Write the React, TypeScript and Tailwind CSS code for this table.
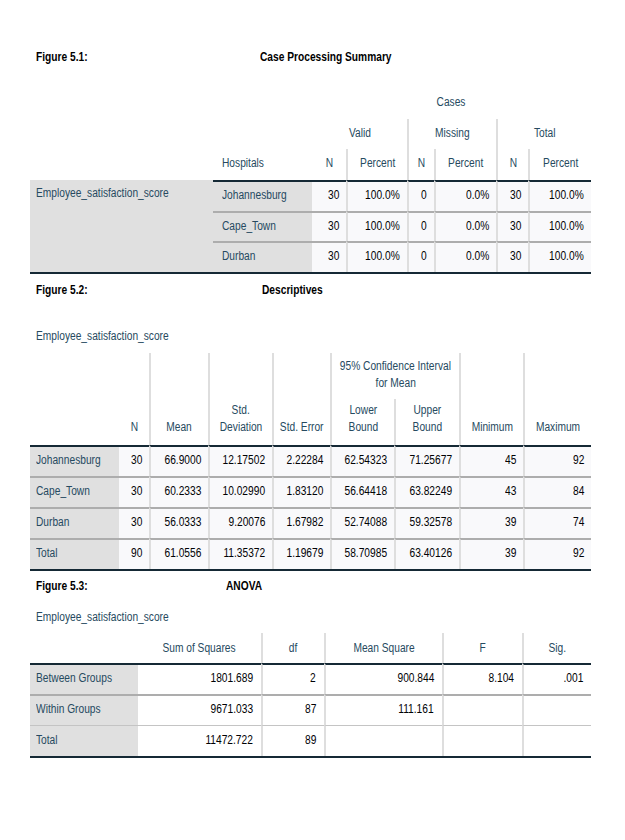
import React from "react";

const FONT = "font-['Liberation_Sans_Narrow','Arial_Narrow','Liberation_Sans',sans-serif]";
const LBL = "text-[#264a60]";
const DAT = "text-[#010205]";
const VL = "border-l-2 border-l-[#dedede]";
const DARK_T = "border-t-2 border-t-[#152935]";
const GRAY_T = "border-t-2 border-t-[#adadad]";
const THIN_T = "border-t border-t-[#c4c4c4]";

function S({ children, o = "origin-left" }: { children: React.ReactNode; o?: string }) {
  return <span className={`inline-block whitespace-nowrap scale-x-[0.85] ${o}`}>{children}</span>;
}

function Title({ fig, name, w }: { fig: string; name: string; w: string }) {
  return (
    <div className="flex h-[16px] items-center pl-[6px] font-bold text-black">
      <span className={w}>
        <S>{fig}</S>
      </span>
      <S>{name}</S>
    </div>
  );
}

function Num({ v, cls = "" }: { v: string; cls?: string }) {
  return (
    <div className={`flex items-center justify-end pb-[3px] pr-[7px] ${DAT} ${cls}`}>
      {v ? <S o="origin-right">{v}</S> : null}
    </div>
  );
}

function C({ children }: { children: React.ReactNode }) {
  return <S o="origin-center">{children}</S>;
}

function Table1() {
  const cols = "grid grid-cols-[183px_99px_34px_61px_27px_62px_32px_63px]";
  const rows = [
    { h: "Johannesburg", t: DARK_T, hh: "h-[31px]" },
    { h: "Cape_Town", t: GRAY_T, hh: "h-[30px]" },
    { h: "Durban", t: GRAY_T, hh: "h-[31px]" },
  ];
  const hc = `flex items-center justify-center pb-[3px] ${LBL}`;
  return (
    <div className="w-[561px]">
      <div className={cols}>
        <div className="col-span-2 h-[31px]" />
        <div className={`col-span-6 ${hc}`}><C>Cases</C></div>
        <div className="col-span-2 h-[30px]" />
        <div className={`col-span-2 ${hc}`}><C>Valid</C></div>
        <div className={`col-span-2 ${hc} ${VL}`}><C>Missing</C></div>
        <div className={`col-span-2 ${hc} ${VL}`}><C>Total</C></div>
        <div className="h-[31px]" />
        <div className={`flex items-center pb-[3px] pl-[9px] ${LBL}`}><S>Hospitals</S></div>
        <div className={hc}><C>N</C></div>
        <div className={`${hc} ${VL}`}><C>Percent</C></div>
        <div className={`${hc} ${VL}`}><C>N</C></div>
        <div className={`${hc} ${VL}`}><C>Percent</C></div>
        <div className={`${hc} ${VL}`}><C>N</C></div>
        <div className={`${hc} ${VL}`}><C>Percent</C></div>
      </div>
      <div className={`${cols} border-b-2 border-b-[#152935]`}>
        <div className={`row-span-3 bg-[#e0e0e0] pl-[6px] pt-[5px] ${LBL}`}>
          <S>Employee_satisfaction_score</S>
        </div>
        {rows.map((r) => (
          <React.Fragment key={r.h}>
            <div className={`flex items-center bg-[#e0e0e0] pb-[3px] pl-[9px] ${r.hh} ${r.t} ${LBL}`}><S>{r.h}</S></div>
            <Num v="30" cls={`bg-[#f9f9fb] ${r.t}`} />
            <Num v="100.0%" cls={`bg-[#f9f9fb] ${r.t} ${VL}`} />
            <Num v="0" cls={`bg-[#f9f9fb] ${r.t} ${VL}`} />
            <Num v="0.0%" cls={`bg-[#f9f9fb] ${r.t} ${VL}`} />
            <Num v="30" cls={`bg-[#f9f9fb] ${r.t} ${VL}`} />
            <Num v="100.0%" cls={`bg-[#f9f9fb] ${r.t} ${VL}`} />
          </React.Fragment>
        ))}
      </div>
    </div>
  );
}

function Table2() {
  const cols = "grid grid-cols-[89px_30px_59px_64px_58px_64px_65px_64px_68px]";
  const hb = `flex flex-col items-center justify-end pb-[9px] text-center ${LBL}`;
  const data = [
    ["Johannesburg", "30", "66.9000", "12.17502", "2.22284", "62.54323", "71.25677", "45", "92"],
    ["Cape_Town", "30", "60.2333", "10.02990", "1.83120", "56.64418", "63.82249", "43", "84"],
    ["Durban", "30", "56.0333", "9.20076", "1.67982", "52.74088", "59.32578", "39", "74"],
    ["Total", "90", "61.0556", "11.35372", "1.19679", "58.70985", "63.40126", "39", "92"],
  ];
  return (
    <div className="w-[561px]">
      <div className={`${cols} grid-rows-[46px_46px] leading-[17px]`}>
        <div className="row-span-2" />
        <div className={`row-span-2 ${hb}`}><C>N</C></div>
        <div className={`row-span-2 ${hb} ${VL}`}><C>Mean</C></div>
        <div className={`row-span-2 ${hb} ${VL}`}>
          <C>Std.</C>
          <C>Deviation</C>
        </div>
        <div className={`row-span-2 ${hb} ${VL}`}><C>Std. Error</C></div>
        <div className={`col-span-2 flex flex-col items-center justify-center pb-[3px] text-center ${VL} ${LBL}`}>
          <C>95% Confidence Interval</C>
          <C>for Mean</C>
        </div>
        <div className={`row-span-2 ${hb} ${VL}`}><C>Minimum</C></div>
        <div className={`row-span-2 ${hb} ${VL}`}><C>Maximum</C></div>
        <div className={`${hb} ${VL}`}>
          <C>Lower</C>
          <C>Bound</C>
        </div>
        <div className={`${hb} ${VL}`}>
          <C>Upper</C>
          <C>Bound</C>
        </div>
      </div>
      <div className={`${cols} border-b-2 border-b-[#152935]`}>
        {data.map((r, i) => {
          const t = i === 0 ? DARK_T : GRAY_T;
          return (
            <React.Fragment key={r[0]}>
              <div className={`flex h-[31px] items-center bg-[#e0e0e0] pb-[3px] pl-[6px] ${t} ${LBL}`}><S>{r[0]}</S></div>
              {r.slice(1).map((v, j) => (
                <Num key={j} v={v} cls={`bg-[#f9f9fb] ${t} ${j === 0 ? "pr-[6px]" : VL}`} />
              ))}
            </React.Fragment>
          );
        })}
      </div>
    </div>
  );
}

function Table3() {
  const cols = "grid grid-cols-[108px_123px_63px_118px_80px_69px]";
  const hc = `flex h-[30px] items-center justify-center ${LBL}`;
  const data = [
    ["Between Groups", "1801.689", "2", "900.844", "8.104", ".001"],
    ["Within Groups", "9671.033", "87", "111.161", "", ""],
    ["Total", "11472.722", "89", "", "", ""],
  ];
  return (
    <div className="w-[561px]">
      <div className={cols}>
        <div />
        <div className={hc}><C>Sum of Squares</C></div>
        <div className={`${hc} ${VL}`}><C>df</C></div>
        <div className={`${hc} ${VL}`}><C>Mean Square</C></div>
        <div className={`${hc} ${VL}`}><C>F</C></div>
        <div className={`${hc} ${VL}`}><C>Sig.</C></div>
      </div>
      <div className={`${cols} border-b-2 border-b-[#152935]`}>
        {data.map((r, i) => {
          const t = i === 0 ? DARK_T : i === 1 ? GRAY_T : THIN_T;
          return (
            <React.Fragment key={r[0]}>
              <div className={`flex h-[31px] items-center bg-[#e0e0e0] pb-[3px] pl-[6px] ${t} ${LBL}`}><S>{r[0]}</S></div>
              {r.slice(1).map((v, j) => (
                <Num key={j} v={v} cls={`bg-white pr-[8px] ${t} ${j === 0 ? "" : VL}`} />
              ))}
            </React.Fragment>
          );
        })}
      </div>
    </div>
  );
}

export default function App() {
  return (
    <div className={`min-h-[840px] w-[625px] bg-white pl-[30px] pt-[49px] text-[12px] leading-[16px] ${FONT}`}>
      <Title fig="Figure 5.1:" name="Case Processing Summary" w="w-[224px]" />
      <div className="mt-[23px]">
        <Table1 />
      </div>
      <div className="mt-[8px]">
        <Title fig="Figure 5.2:" name="Descriptives" w="w-[226px]" />
      </div>
      <div className={`mt-[30px] pl-[6px] ${LBL}`}>
        <S>Employee_satisfaction_score</S>
      </div>
      <div className="mt-[9px]">
        <Table2 />
      </div>
      <div className="mt-[7px]">
        <Title fig="Figure 5.3:" name="ANOVA" w="w-[190px]" />
      </div>
      <div className={`mt-[15px] pl-[6px] ${LBL}`}>
        <S>Employee_satisfaction_score</S>
      </div>
      <div className="mt-[8px]">
        <Table3 />
      </div>
    </div>
  );
}
